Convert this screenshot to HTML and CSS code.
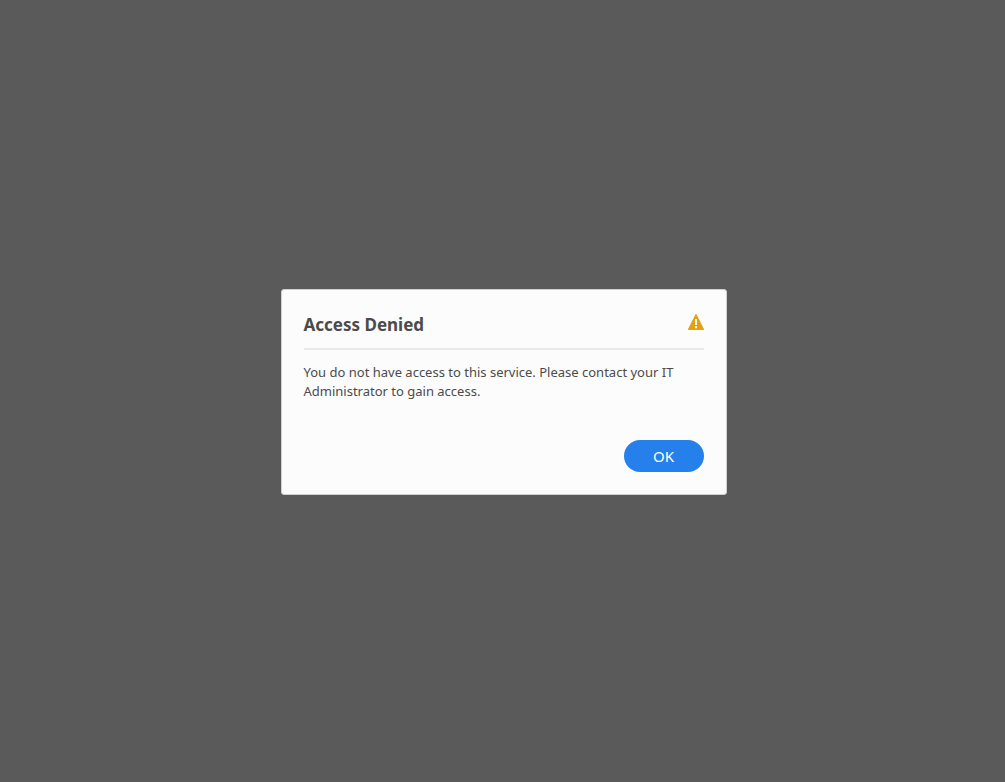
FILE: index.html
```
<!DOCTYPE html>
<html lang="en">
<head>
    <meta charset="UTF-8">
    <meta name="viewport" content="width=device-width, initial-scale=1">
    <title>Access Denied</title>
    <link rel="stylesheet" href="styles.css">
</head>
<body>

<div class="dialog" role="alertdialog" aria-labelledby="dialogTitle" aria-describedby="dialogMessage">
    <div class="dialog-header">
        <h1 id="dialogTitle">Access Denied</h1>
        <svg class="alert-icon" viewBox="0 0 16 16" aria-hidden="true">
            <path fill="#e3a10f" fill-rule="evenodd" d="M7.4.4a.7.7 0 0 1 1.2 0l7.3 14.7a.6.6 0 0 1-.5.9H.6a.6.6 0 0 1-.5-.9zM7 5v6h2V5zM7 12.2v2h2v-2z"/>
        </svg>
    </div>
    <p class="message" id="dialogMessage">You do not have access to this service. Please contact your IT Administrator to gain access.</p>
    <div class="dialog-footer">
        <button type="button" class="ok-button">OK</button>
    </div>
</div>

</body>
</html>
```

FILE: styles.css
```
* {
    box-sizing: border-box;
}
body {
    margin: 0;
    min-height: 100vh;
    padding: 2px 0 0 2px;
    display: flex;
    align-items: center;
    justify-content: center;
    background: #5a5a5a;
    color: #4b4b4b;
    font-family: "Segoe UI", "Noto Sans", sans-serif;
}
.dialog {
    width: 446px;
    max-width: 100%;
    padding: 22px;
    background: #fcfcfc;
    border: 1px solid #d0d0d0;
    border-radius: 3px;
}
.dialog-header {
    display: flex;
    align-items: flex-start;
    justify-content: space-between;
    padding-bottom: 10px;
    border-bottom: 2px solid #eaeaea;
}
h1 {
    margin: 0;
    font-size: 17px;
    line-height: 26px;
}
.alert-icon {
    width: 16px;
    height: 16px;
    margin-top: 2px;
}
.message {
    margin: 13px 0 39px;
    font-size: 13px;
    line-height: 19px;
}
.dialog-footer {
    display: flex;
    justify-content: flex-end;
}
.ok-button {
    width: 80px;
    height: 32px;
    border: none;
    border-radius: 16px;
    background: #2680eb;
    color: white;
    font-family: inherit;
    font-size: 15px;
    cursor: pointer;
}
.ok-button:hover {
    background: #1473e6;
}
```
